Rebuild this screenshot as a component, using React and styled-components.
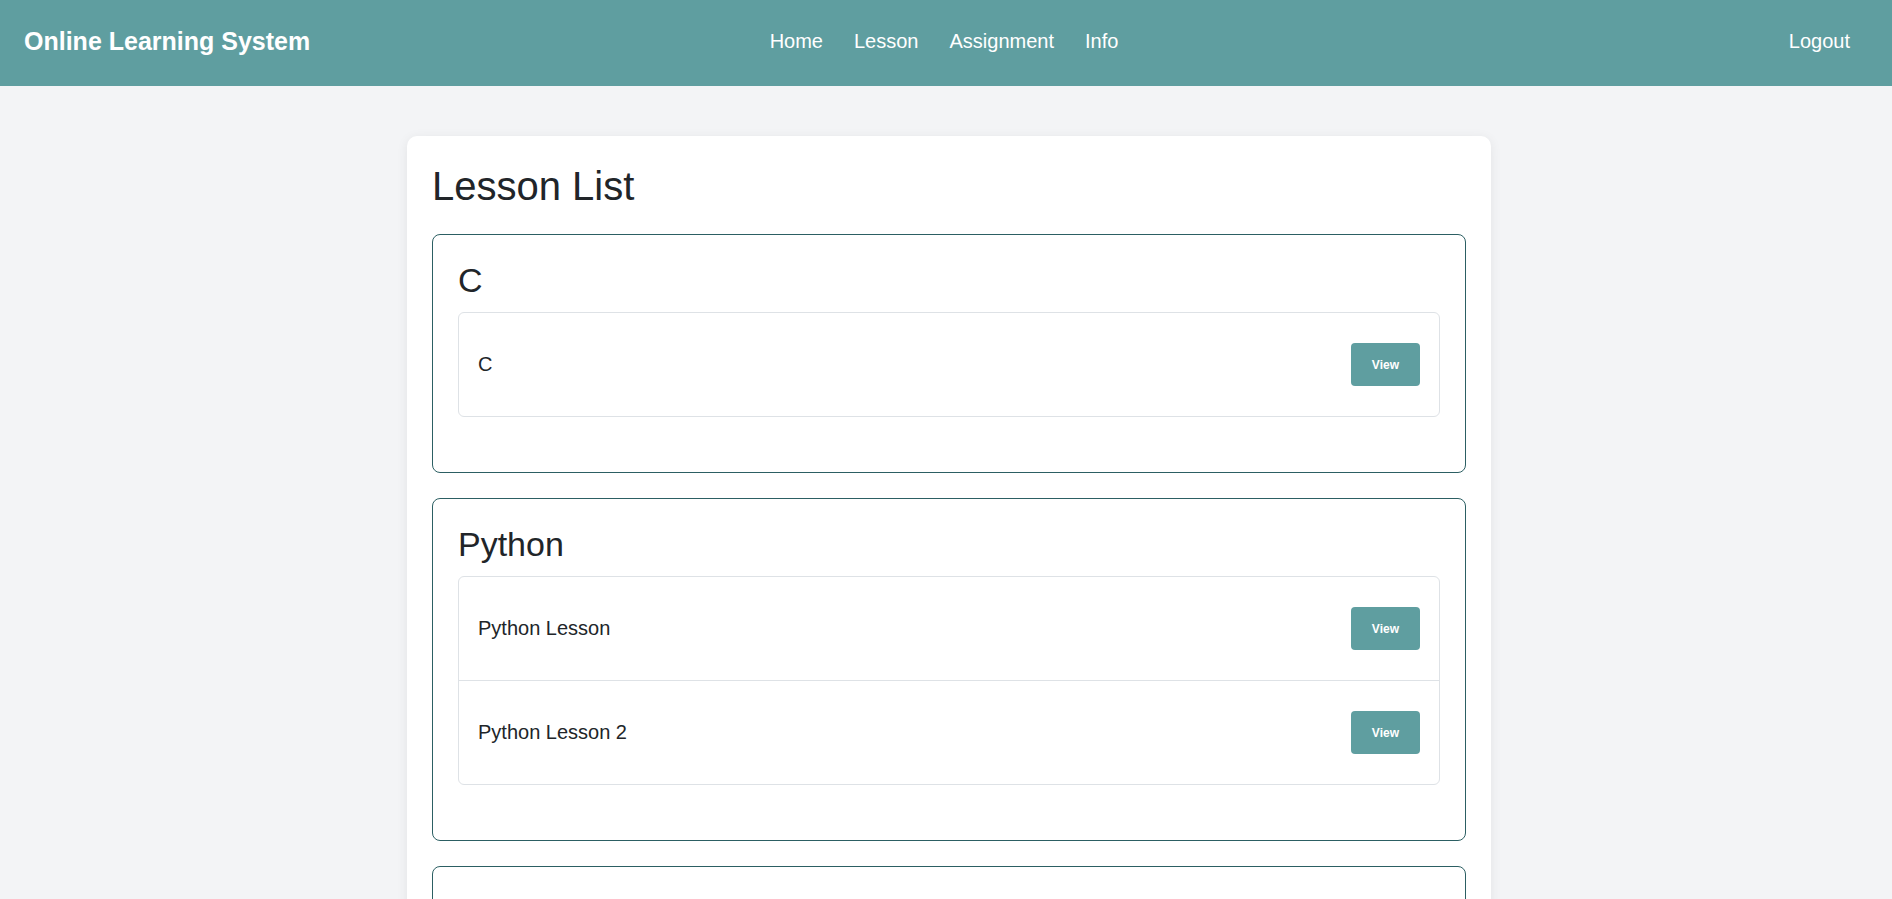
import styled, { createGlobalStyle } from 'styled-components';

const GlobalStyle = createGlobalStyle`
  * {
    box-sizing: border-box;
  }
  body {
    margin: 0;
    background: #f3f4f6;
    font-family: "Liberation Sans", Arial, sans-serif;
    color: #212529;
  }
`;

const courses = [
  { name: 'C', lessons: ['C'] },
  { name: 'Python', lessons: ['Python Lesson', 'Python Lesson 2'] },
  { name: 'Java', lessons: ['Java Lesson'] },
];

const App = () => {
  return (
    <>
      <GlobalStyle />
      <Header>
        <Brand>Online Learning System</Brand>
        <Nav>
          <NavLink href="#">Home</NavLink>
          <NavLink href="#">Lesson</NavLink>
          <NavLink href="#">Assignment</NavLink>
          <NavLink href="#">Info</NavLink>
        </Nav>
        <LogoutButton>Logout</LogoutButton>
      </Header>
      <Main>
        <Card>
          <PageTitle>Lesson List</PageTitle>
          {courses.map((course) => (
            <CourseSection key={course.name}>
              <CourseTitle>{course.name}</CourseTitle>
              <LessonGroup>
                {course.lessons.map((lesson) => (
                  <LessonRow key={lesson}>
                    <LessonName>{lesson}</LessonName>
                    <ViewButton>View</ViewButton>
                  </LessonRow>
                ))}
              </LessonGroup>
            </CourseSection>
          ))}
        </Card>
      </Main>
    </>
  );
};

export default App;

const Header = styled.header`
  height: 86px;
  display: grid;
  grid-template-columns: 1fr auto 1fr;
  align-items: center;
  padding: 0 24px 3px 24px;
  background-color: #5f9ea0;
  color: #fff;
`;

const Brand = styled.div`
  font-size: 25px;
  font-weight: 700;
  white-space: nowrap;
`;

const Nav = styled.nav`
  display: flex;
  flex-direction: row;
  align-items: center;
  gap: 31px;
  margin-right: 4px;
`;

const NavLink = styled.a`
  color: #fff;
  text-decoration: none;
  font-size: 20px;
`;

const LogoutButton = styled.button`
  justify-self: end;
  background: transparent;
  border: none;
  color: #fff;
  font-family: inherit;
  font-size: 20px;
  padding: 8px 18px;
  cursor: pointer;
`;

const Main = styled.main`
  display: flex;
  justify-content: center;
  padding: 50px 0 40px 6px;
`;

const Card = styled.div`
  width: 1084px;
  background: #fff;
  border-radius: 10px;
  box-shadow: 0 2px 12px rgba(0, 0, 0, 0.07);
  padding: 28px 25px 24px;
`;

const PageTitle = styled.h1`
  margin: 0 0 25px;
  font-size: 40px;
  font-weight: 400;
  line-height: normal;
`;

const CourseSection = styled.section`
  border: 1px solid #2c5f63;
  border-radius: 8px;
  padding: 26px 25px 24px;
  margin-bottom: 25px;
`;

const CourseTitle = styled.h2`
  margin: 0 0 12px;
  font-size: 34px;
  font-weight: 400;
  line-height: normal;
`;

const LessonGroup = styled.div`
  border: 1px solid #dee2e6;
  border-radius: 6px;
  margin-bottom: 31px;
`;

const LessonRow = styled.div`
  display: flex;
  flex-direction: row;
  align-items: center;
  justify-content: space-between;
  padding: 30px 19px;

  & + & {
    border-top: 1px solid #dee2e6;
  }
`;

const LessonName = styled.span`
  font-size: 20px;
`;

const ViewButton = styled.button`
  height: 43px;
  padding: 0 21px;
  border: none;
  border-radius: 4px;
  background-color: #5f9ea0;
  color: #fff;
  font-family: inherit;
  font-size: 12px;
  font-weight: 700;
  cursor: pointer;
`;
